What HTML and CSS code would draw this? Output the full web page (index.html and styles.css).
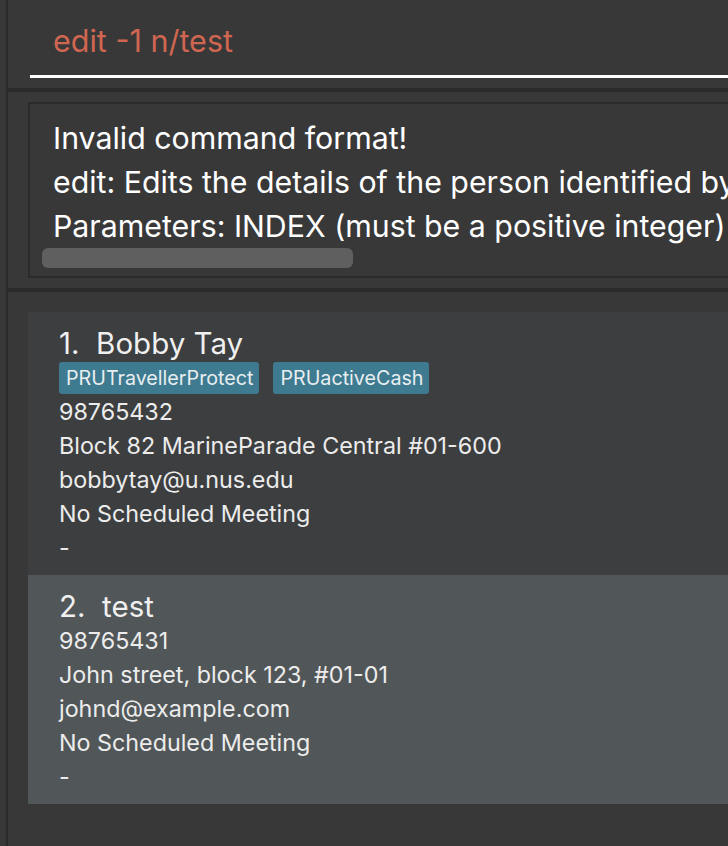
FILE: index.html
```html
<!DOCTYPE html>
<html>
<head>
<meta charset="utf-8">
<link rel="stylesheet" href="styles.css">
</head>
<body>
<div class="app">
  <div class="command-pane">
    <div class="command-field">edit -1 n/test</div>
  </div>
  <div class="divider"></div>
  <div class="result-pane">
    <div class="result-box">
      <div class="result-text">Invalid command format!<br>edit: Edits the details of the person identified by<br>Parameters: INDEX (must be a positive integer)</div>
      <div class="scrollbar"></div>
    </div>
  </div>
  <div class="divider"></div>
  <div class="list-pane">
    <div class="card card-even">
      <div class="name">1.&nbsp;&nbsp;Bobby Tay</div>
      <div class="tags"><span class="tag">PRUTravellerProtect</span><span class="tag">PRUactiveCash</span></div>
      <div class="line">98765432</div>
      <div class="line">Block 82 MarineParade Central #01-600</div>
      <div class="line">bobbytay@u.nus.edu</div>
      <div class="line">No Scheduled Meeting</div>
      <div class="line">-</div>
    </div>
    <div class="card card-odd">
      <div class="name">2.&nbsp;&nbsp;test</div>
      <div class="line">98765431</div>
      <div class="line">John street, block 123, #01-01</div>
      <div class="line">johnd@example.com</div>
      <div class="line">No Scheduled Meeting</div>
      <div class="line">-</div>
    </div>
  </div>
</div>
</body>
</html>
```
FILE: styles.css
```css
html, body {
  margin: 0;
  padding: 0;
  background: #383838;
  overflow: hidden;
}
body {
  width: 728px;
  height: 846px;
  font-family: Inter, "Noto Sans", sans-serif;
}
.app {
  margin-left: 6px;
  border-left: 2px solid #2b2b2b;
  height: 846px;
  display: flex;
  flex-direction: column;
  background: #383838;
}
.command-pane {
  height: 88px;
  padding-left: 22px;
  box-sizing: border-box;
}
.command-field {
  height: 78px;
  box-sizing: border-box;
  border-bottom: 3px solid #ffffff;
  padding-left: 23px;
  padding-top: 21px;
  font-size: 30.5px;
  line-height: 40px;
  color: #d06651;
  white-space: nowrap;
}
.divider {
  height: 4px;
  background: #2b2b2b;
  flex: none;
}
.result-pane {
  height: 196px;
  padding: 10px 0 0 20px;
  box-sizing: border-box;
}
.result-box {
  height: 176px;
  box-sizing: border-box;
  border: 2px solid #2b2b2b;
  border-right: none;
  position: relative;
  overflow: hidden;
  padding: 12px 0 0 23px;
}
.result-text {
  color: #ffffff;
  font-size: 30.3px;
  line-height: 44px;
  white-space: nowrap;
}
.scrollbar {
  position: absolute;
  left: 12px;
  top: 144px;
  width: 311px;
  height: 20px;
  border-radius: 6px;
  background: #5f5f5f;
}
.list-pane {
  flex: 1;
  padding: 20px 0 0 20px;
}
.card {
  padding: 13px 0 10px 31px;
  color: #ececec;
  white-space: nowrap;
  overflow: hidden;
}
.card-even { background: #3c3e3f; }
.card-odd { background: #515658; }
.name {
  font-size: 29.5px;
  line-height: 36px;
  color: #f0f0f0;
}
.tags {
  display: flex;
  gap: 14px;
  padding: 1px 0 1px 0;
}
.tag {
  background: #3e7b91;
  color: #e8eef0;
  font-size: 19.7px;
  line-height: 32px;
  padding: 0 6px 0 7px;
  border-radius: 3px;
}
.line {
  font-size: 23.3px;
  line-height: 34px;
}
```
